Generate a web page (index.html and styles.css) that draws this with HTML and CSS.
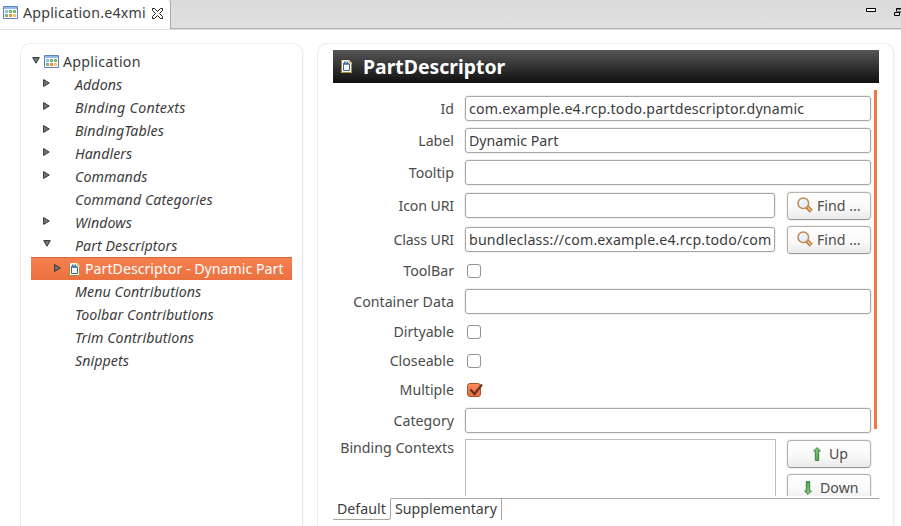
FILE: index.html
```html
<!DOCTYPE html>
<html lang="en">
<head>
<meta charset="utf-8">
<title>Application.e4xmi</title>
<link rel="stylesheet" href="styles.css">
</head>
<body>
<svg class="defs" aria-hidden="true">
  <defs>
    <linearGradient id="green" x1="0" y1="0" x2="1" y2="1"><stop offset="0" stop-color="#a8db8e"/><stop offset="1" stop-color="#3d963d"/></linearGradient>
    <symbol id="app" viewBox="0 0 15 13">
      <path d="M.5.5h14v12H.5z" fill="#fff" stroke="#5c84b8"/><path d="M1 1h13v2H1z" fill="#91b8e6"/>
      <path d="M2.5 4.5h2v2h-2z" fill="#b9dcff" stroke="#71b5ed"/><path d="M6.5 4.5h2v2h-2zM10.5 4.5h2v2h-2zM2.5 8.5h2v2h-2z" fill="#9ccc87" stroke="#68aa60"/>
      <path d="M6.5 8.5h2v2h-2z" fill="#ff9650" stroke="#ef7b45"/><path d="M10.5 8.5h2v2h-2z" fill="#ffdf86" stroke="#e8bf53"/>
    </symbol>
    <symbol id="part" viewBox="0 0 11 14">
      <path d="M0 1h8l3 3v10H0z" fill="#fffbe5"/><path d="M.5 1.5v12h10V4.5M.5 1.5h1" fill="none" stroke="#a98a45"/>
      <path d="M2.5 5v6.5h6V5z" fill="#f4f9ff" stroke="#42668b"/><path d="M2 4h6v1.5H2zM3 2.5h1.5V4H3zM5.5 2.5H7V4H5.5z" fill="#3674b5"/><path d="M7 .5L10.8 4.5H8.5z" fill="#e1b654"/>
    </symbol>
    <symbol id="right" viewBox="0 0 7 8"><path d="M.6.6v6.8L6.2 4z" fill="#777" stroke="#333"/></symbol>
    <symbol id="down" viewBox="0 0 8 7"><path d="M.7.6h6.6L4 6.2z" fill="#777" stroke="#333"/></symbol>
    <symbol id="find" viewBox="0 0 16 16">
      <path d="M10 10l4.2 4.2" stroke="#a86226" stroke-width="4"/><path d="M10.4 10.1l3.5 3.7" stroke="#ecc078" stroke-width="2"/>
      <circle cx="6.3" cy="6.3" r="5.3" fill="#e7f1fb" stroke="#c4884f" stroke-width="1.5"/><path d="M3.5 6a3 3 0 0 1 3-3" fill="none" stroke="#fff"/>
    </symbol>
    <symbol id="arrow" viewBox="0 0 8 14"><path d="M4 .6L7.4 4H5.7v9.4H2.3V4H.6z" fill="url(#green)" stroke="#348342"/></symbol>
  </defs>
</svg>
<header class="bar">
  <div class="editor-tab">
    <svg class="app"><use href="#app"/></svg><span class="w-file">Application.e4xmi</span>
    <svg class="close" viewBox="0 0 11 11"><path d="M.5.5h2l3 3 3-3h2v2l-3 3 3 3v2h-2l-3-3-3 3h-2v-2l3-3-3-3z" fill="#fff" stroke="#222"/></svg>
  </div>
  <svg class="window-tools" viewBox="0 0 35 10"><path d="M.5.5h9v3h-9z" fill="#fff" stroke="#000"/><path d="M30.5 3.5v-3H35M30 1h5M28.5 4.5h5v3h-5z" fill="none" stroke="#000"/><path d="M31 4h4" stroke="#000"/></svg>
</header>
<main>
  <nav class="panel tree">
    <div class="node root"><svg class="down"><use href="#down"/></svg><svg class="app"><use href="#app"/></svg><span class="w-app">Application</span></div>
    <div class="node"><svg class="right"><use href="#right"/></svg><span>Addons</span></div>
    <div class="node"><svg class="right"><use href="#right"/></svg><span class="w-app">Binding Contexts</span></div>
    <div class="node"><svg class="right"><use href="#right"/></svg><span>BindingTables</span></div>
    <div class="node"><svg class="right"><use href="#right"/></svg><span>Handlers</span></div>
    <div class="node"><svg class="right"><use href="#right"/></svg><span>Commands</span></div>
    <div class="node leaf"><span>Command Categories</span></div>
    <div class="node"><svg class="right"><use href="#right"/></svg><span>Windows</span></div>
    <div class="node open"><svg class="down"><use href="#down"/></svg><span>Part Descriptors</span></div>
    <div class="node selected"><svg class="right"><use href="#right"/></svg><svg class="part"><use href="#part"/></svg><span class="w-selected">PartDescriptor - Dynamic Part</span></div>
    <div class="node leaf"><span>Menu Contributions</span></div>
    <div class="node leaf"><span>Toolbar Contributions</span></div>
    <div class="node leaf"><span>Trim Contributions</span></div>
    <div class="node leaf"><span>Snippets</span></div>
  </nav>
  <section class="panel details">
    <h1><svg class="part"><use href="#part"/></svg><span>PartDescriptor</span></h1>
    <div class="form">
      <div class="fields">
        <div class="row"><label>Id</label><div class="input"><span class="w-id">com.example.e4.rcp.todo.partdescriptor.dynamic</span></div></div>
        <div class="row"><label>Label</label><div class="input"><span>Dynamic Part</span></div></div>
        <div class="row"><label>Tooltip</label><div class="input"></div></div>
        <div class="row action"><label>Icon URI</label><div class="input"></div><div class="button"><svg class="find"><use href="#find"/></svg><span>Find ...</span></div></div>
        <div class="row action"><label>Class URI</label><div class="input"><span class="w-uri">bundleclass://com.example.e4.rcp.todo/com</span></div><div class="button"><svg class="find"><use href="#find"/></svg><span>Find ...</span></div></div>
        <div class="row check first"><label>ToolBar</label><i class="box"></i></div>
        <div class="row after-check"><label>Container Data</label><div class="input"></div></div>
        <div class="row check first"><label>Dirtyable</label><i class="box"></i></div>
        <div class="row check"><label>Closeable</label><i class="box"></i></div>
        <div class="row check"><label>Multiple</label><i class="box checked"><svg viewBox="0 0 17 15"><path d="M3.5 6.5l4 4.5L15 1.5" fill="none" stroke="#653324" stroke-width="2.2"/></svg></i></div>
        <div class="row after-check"><label>Category</label><div class="input"></div></div>
        <div class="row contexts"><label>Binding Contexts</label><div class="list"></div><div class="stack"><div class="button up"><svg class="arrow"><use href="#arrow"/></svg><span>Up</span></div><div class="button dn"><svg class="arrow flip"><use href="#arrow"/></svg><span>Down</span></div></div></div>
      </div>
      <div class="scroll"></div>
    </div>
    <footer><div class="page-tab active"><span>Default</span></div><div class="page-tab"><span>Supplementary</span></div><div class="rest"></div></footer>
  </section>
</main>
</body>
</html>
```
FILE: styles.css
```css
* { box-sizing: border-box; }
body { margin: 0; width: 901px; height: 526px; overflow: hidden; background: #fff; color: #3c3c3c; font: 14.2px/20px "Noto Sans", "Open Sans", sans-serif; }
svg { display: block; flex: none; overflow: visible; }
span, label { white-space: nowrap; }
.defs { position: absolute; width: 0; height: 0; }
.app { width: 15px; height: 13px; }
.part { width: 11px; height: 14px; }
.right { width: 7px; height: 8px; }
.down { width: 8px; height: 7px; }
.find { width: 16px; height: 16px; }
.arrow { width: 8px; height: 14px; }
.flip { transform: rotate(180deg); }

.bar { display: flex; justify-content: space-between; height: 30px; background: linear-gradient(#dadada, #e1e1e1); border-bottom: 1px solid #dedede; box-shadow: inset 0 -1px #b0b0b0; }
.editor-tab { display: flex; align-items: center; width: 171px; height: 29px; padding: 0 0 3px 3px; background: #fff; border-right: 1px solid #aaa; border-top-right-radius: 3px; }
.editor-tab .app { margin-top: -1px; }
.editor-tab span { width: 125px; margin-left: 5px; }
.close { width: 11px; height: 11px; margin: 0 0 0 4px; }
.window-tools { width: 35px; height: 10px; margin-top: 8px; }

main { display: flex; gap: 14px; height: 496px; padding: 13px 6px 0 20px; }
.panel { flex: none; border: 1px solid #ececec; border-bottom: 0; border-radius: 10px 10px 0 0; box-shadow: 1px 0 1px #f7f7f7; }
.tree { width: 283px; padding: 6px 10px; letter-spacing: .08px; }
.node { display: flex; align-items: center; height: 23px; padding-left: 12px; font-style: italic; }
.node > .right { margin: -3px 25px 0 0; }
.open .down { margin: -4px 24px 0 0; }
.leaf { padding-left: 44px; }
.root { padding-left: 1px; font-style: normal; }
.root .down { margin: -3px 4px 0 0; }
.root span { margin-left: 4px; }
.selected { width: 261px; padding-left: 23px; background: linear-gradient(#f5804e, #eb7140); border-top: 1px solid #d76a3b; color: #fff; font-style: normal; }
.selected > .right { margin: -2px 8px 0 0; }
.selected span { margin-left: 5px; }
.w-file { letter-spacing: .22px; }
.w-app { letter-spacing: .27px; }
.w-id { letter-spacing: .19px; }
.w-uri { letter-spacing: .16px; }
.w-selected { letter-spacing: 0; }

.details { display: flex; flex-direction: column; width: 577px; padding: 6px 14px 0 15px; }
h1 { display: flex; align-items: center; flex: none; width: 546px; height: 33px; margin: 0; padding-left: 8px; background: linear-gradient(#555, #101010); color: #fff; font: bold 19.4px/33px "Noto Sans", sans-serif; }
h1 .part { margin: -2px 11px 0 0; }
.form { display: flex; flex: none; height: 413px; overflow: hidden; }
.fields { width: 538px; padding-top: 13px; }
.row { display: flex; align-items: center; height: 25px; margin-bottom: 7px; }
label { flex: none; width: 121px; margin-right: 10px; text-align: right; color: #4c4c4c; }
.input { display: flex; align-items: center; flex: 1; min-width: 0; height: 25px; margin-left: 1px; padding: 0 4px; overflow: hidden; border: 1px solid #aaa7a2; border-radius: 3px; box-shadow: 0 0 0 1px #f1f0ef; background: #fff; }
.input span { margin-left: -1px; }
.action { height: 27px; }
.action label { letter-spacing: -.15px; }
.action .input { flex: 0 0 310px; margin-right: 12px; }
.button { display: flex; align-items: center; width: 84px; height: 28px; padding-left: 9px; color: #4c4c4c; border: 1px solid #b5b2ae; border-bottom-color: #999; border-radius: 4px; background: linear-gradient(#fff, #f8f8f8 60%, #ebeaea); box-shadow: 0 0 0 1px #f2f1f0; }
.find + span { margin-left: 4px; }
.find { margin-top: -2px; }
.check { height: 20px; margin-bottom: 9px; }
.check.first { margin-top: 8px; }
.after-check { margin-top: -1px; }
.box { position: relative; width: 14px; height: 14px; margin: -1px 0 0 3px; border: 1px solid #96928d; border-radius: 3px; }
.checked { background: linear-gradient(#ff8a5a, #e46e40); border-color: #a9502d; }
.box svg { position: absolute; left: -1px; top: -1px; width: 17px; height: 15px; }
.contexts { align-items: flex-start; height: 57px; margin-top: -1px; }
.contexts label { margin-top: -1px; }
.list { width: 312px; height: 57px; margin: 0 11px 0 0; border: 1px solid #bbb; border-bottom: 0; }
.contexts label + .list { margin-left: 1px; }
.stack { display: grid; gap: 6px; padding-top: 1px; }
.button.up { padding-left: 25px; }
.up span { margin-left: 8px; }
.button.dn { padding-left: 16px; }
.dn span { margin-left: 8px; }
.scroll { width: 3px; height: 339px; margin: 7px 0 0 3px; background: #f07848; }
footer { display: flex; width: 546px; height: 22px; margin-top: 2px; }
.page-tab { width: 111px; height: 22px; padding-left: 4px; border-top: 1px solid #aaa59f; border-right: 1px solid #aaa59f; }
.page-tab.active { width: 58px; border-top-color: transparent; border-bottom: 1px solid #aaa59f; border-bottom-right-radius: 3px; }
.rest { flex: 1; border-top: 1px solid #aaa59f; }
```
